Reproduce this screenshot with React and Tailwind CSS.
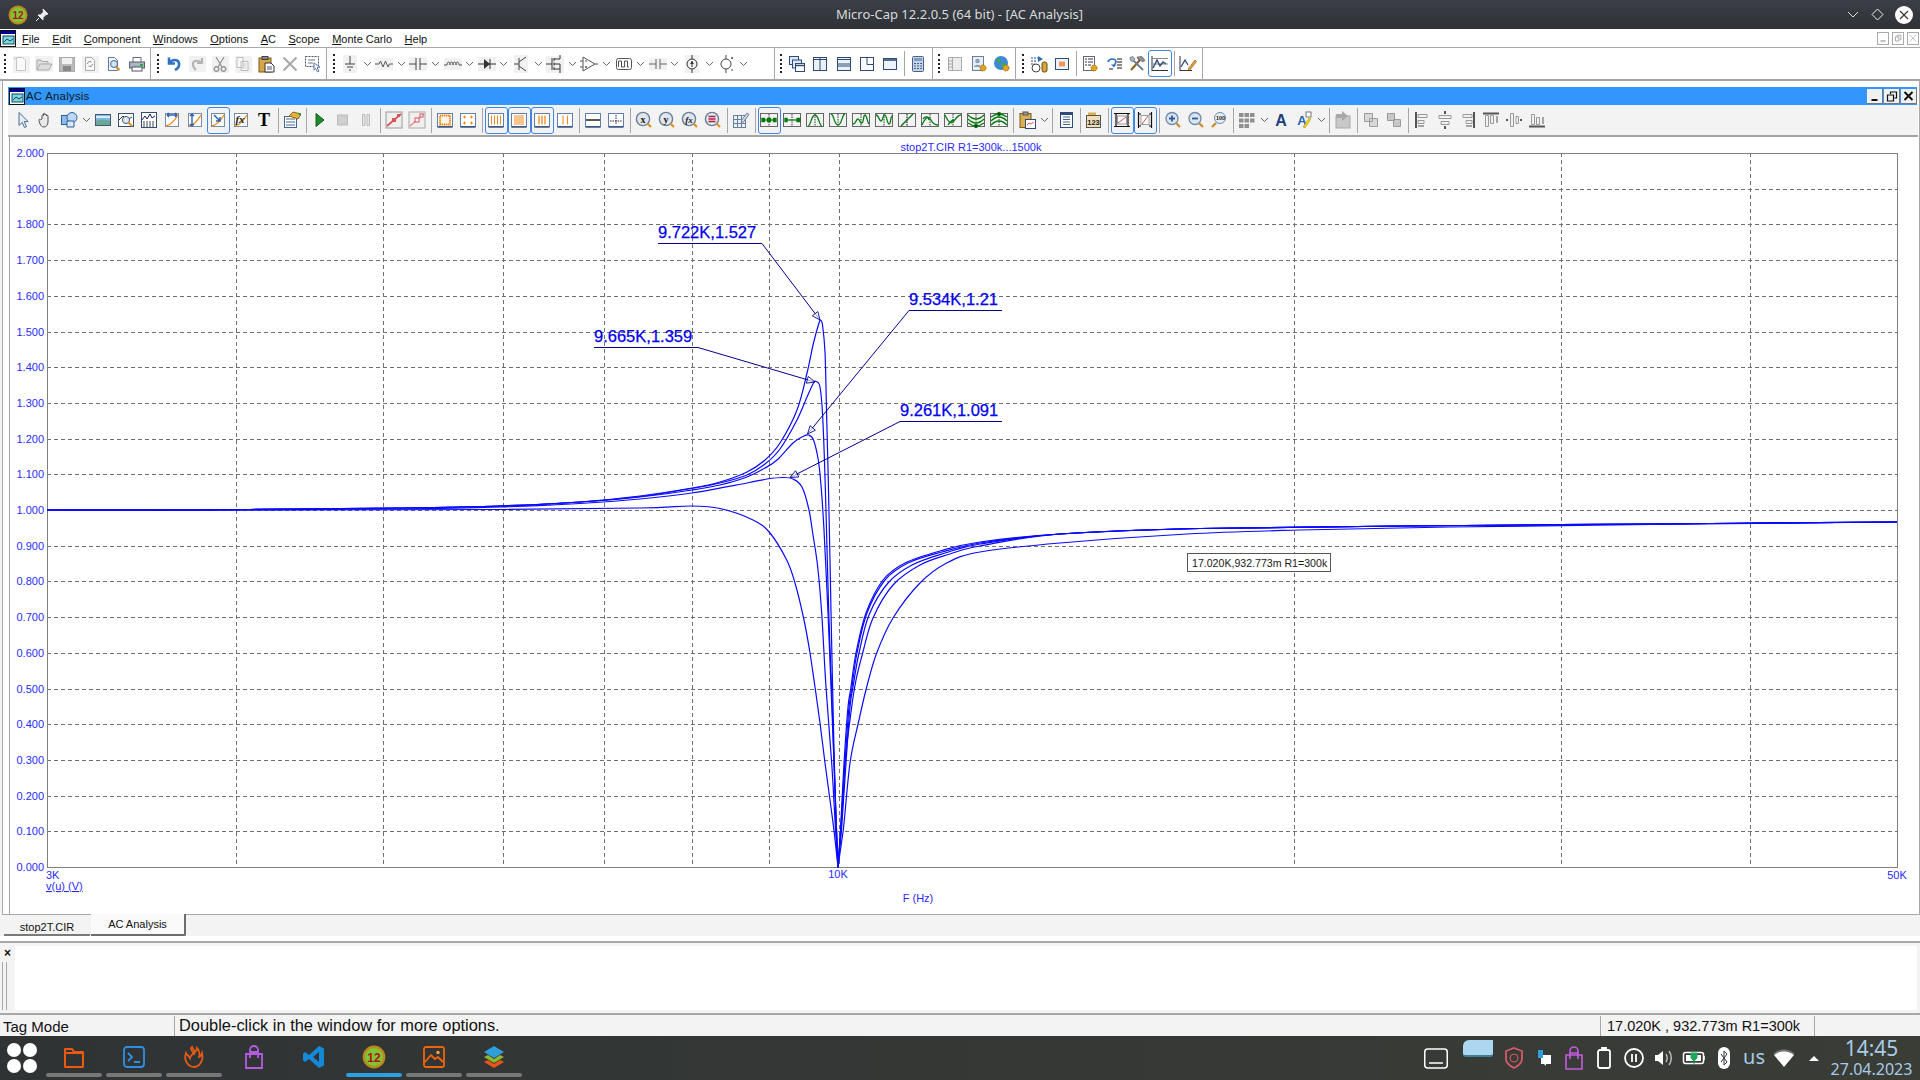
import React from 'react';

const SANS = { fontFamily: '"Liberation Sans", Arial, sans-serif' };

// toolbar glyphs, all drawn on an 18x18 grid
const Ic = ({ children }) => (
  <svg width="18" height="18" viewBox="0 0 18 18" fill="none" className="block">{children}</svg>
);

const Doc = ({ c = '#c4c4c4' }) => <path d="M4.5 2.5h6l3 3v10h-9z" fill="#fafafa" stroke={c} />;
const Frame = ({ c = '#5f7fae' }) => (
  <>
    <rect x="1.5" y="2.5" width="15" height="13" fill="#fff" stroke={c} />
    <path d="M1.5 16h15" stroke="#2d4a78" strokeWidth="1.4" />
  </>
);
const CurveBox = ({ children }) => (
  <>
    <rect x="2.5" y="2.5" width="13" height="13" fill="#fdfdfd" stroke="#7a8ba5" />
    <path d="M3 15C8 14 12 9 15 4" stroke="#ef8a1a" strokeWidth="1.3" />
    {children}
  </>
);
const GreenBox = ({ children, tick = true }) => (
  <>
    <path d="M0.5 2.5h17M0.5 15.5h17M0.5 2v14M17.5 2v14" stroke="#666" strokeWidth="1" />
    {tick && <path d="M9 3v12" stroke="#333" strokeDasharray="1.5 1" />}
    <g stroke="#0a7a12" strokeWidth="1.3">{children}</g>
  </>
);
const Lens = ({ children }) => (
  <>
    <circle cx="8" cy="8" r="6.6" fill="#dfe6ee" stroke="#6d7f96" strokeWidth="1.4" />
    <path d="M12.5 12.5l3.5 3.5" stroke="#e09020" strokeWidth="2.2" />
    {children}
  </>
);
const Txt = ({ x = 9, y = 12, s = 10, c = '#1b1b1b', f = '"Liberation Serif", serif', children, i }) => (
  <text x={x} y={y} fontSize={s} fill={c} textAnchor="middle" fontWeight="700" fontStyle={i ? 'italic' : 'normal'} fontFamily={f}>{children}</text>
);
const Gear = ({ x = 13, y = 13 }) => <circle cx={x} cy={y} r="3" fill="#e0a51c" stroke="#9a6a10" strokeDasharray="1.4 .8" />;

const ICONS = {
  new: <><rect x="1" y="1" width="17" height="17" fill="#f1f1f1" /><Doc /><path d="M2 2l3 3M5 2L2 5" stroke="#ccc" /></>,
  open: <><rect y="1" width="18" height="16" fill="#f1f1f1" /><path d="M2 15V5h4l1 1.5h6V9M2 15l3-6h12l-3 6z" fill="#ddd" stroke="#aaa" /></>,
  save: <><rect x="1.5" y="2.5" width="15" height="14" fill="#bbb" stroke="#aaa" /><rect x="4" y="3" width="10" height="6" fill="#f1f1f1" /><rect x="5" y="11" width="8" height="5" fill="#888" /></>,
  reload: <><rect x="1" y="1" width="17" height="17" fill="#f1f1f1" /><Doc c="#aaa" /><path d="M6.5 9a2.5 2.5 0 0 1 4-2M11.5 9a2.5 2.5 0 0 1-4 2" stroke="#888" /></>,
  preview: <><Doc c="#5a7aa8" /><circle cx="10" cy="9" r="3.5" fill="#cfe3f6" stroke="#44648e" /><path d="M12.5 12l3 3" stroke="#e08a20" strokeWidth="2.2" /></>,
  print: <><path d="M5 7V2.5h8V7" fill="#fff" stroke="#667" /><rect x="1.5" y="7" width="15" height="6" fill="#a9b4c2" stroke="#55606e" /><rect x="4" y="12" width="10" height="4" fill="#fff" stroke="#556" /><rect x="12" y="9" width="3" height="2" fill="#1bb33a" /></>,
  undo: <path d="M4 2.5v6h6M4.5 8C7 4 13 4 14 8c.6 3-1 5.5-4 7" stroke="#2f6fc4" strokeWidth="2.6" />,
  redo: <><rect x="1" y="1" width="17" height="16" fill="#f1f1f1" /><path d="M14 3v5H9M13.5 8C11.5 5 6 5 5 8c-.6 3 1 5 3 7" stroke="#b4b4b4" strokeWidth="2.2" /></>,
  cut: <><rect x="1" y="1" width="17" height="17" fill="#f1f1f1" /><path d="M5 2l6 10M13 2L7 12" stroke="#999" strokeWidth="1.4" /><circle cx="5.5" cy="14" r="2.3" stroke="#999" strokeWidth="1.4" /><circle cx="12.5" cy="14" r="2.3" stroke="#999" strokeWidth="1.4" /></>,
  copy: <><rect x="1" y="1" width="17" height="17" fill="#f1f1f1" /><path d="M3 2.5h6v10H3zM7 6.5h7v9H7z" fill="#fafafa" stroke="#bbb" /><path d="M8.5 9h4M8.5 11h4M8.5 13h4" stroke="#ccc" /></>,
  paste: <><rect x="2" y="3" width="12" height="14" fill="#d8a648" stroke="#7a5a20" /><rect x="5" y="1.5" width="6" height="3" fill="#888" stroke="#444" /><path d="M8 8h6l3 3v6H8z" fill="#fff" stroke="#333" /><path d="M10 12h5M10 14h5" stroke="#557" /></>,
  del: <path d="M2.5 2.5l13 13M15.5 2.5l-13 13" stroke="#aaa" strokeWidth="2.2" />,
  select: <><rect x="1.5" y="1.5" width="13" height="10" stroke="#44566e" strokeDasharray="2 1" /><path d="M4 5h7M4 8h5" stroke="#777" /><path d="M10 8l6 4-3 .6 2 3.5-1.5.8-1.8-3.4L10 15z" fill="#fff" stroke="#5a7ba8" /></>,
  ground: <><rect x="2" y="0" width="14" height="18" fill="#f1f1f1" /><path d="M9 1v8M4 9h10M6 12h6M8 15h2" stroke="#444" /></>,
  res: <><rect y="3" width="18" height="12" fill="#f1f1f1" /><path d="M0 9h4l1.5-3 2.5 6 2.5-6 2.5 6 1.5-3h4" stroke="#555" /></>,
  cap: <><rect y="2" width="18" height="14" fill="#f1f1f1" /><path d="M0 9h7M11 9h7M7 3v12M11 3v12" stroke="#444" /></>,
  ind: <><rect y="3" width="18" height="12" fill="#f1f1f1" /><path d="M0 10h3c0-4 3-4 3 0 0-4 3-4 3 0 0-4 3-4 3 0 0-4 3-4 3 0h3" stroke="#555" /></>,
  diode: <><rect y="2" width="18" height="14" fill="#f1f1f1" /><path d="M0 9h18M12 4v10" stroke="#333" /><path d="M6 4v10l6-5z" fill="#333" /></>,
  bjt: <><rect x="2" width="14" height="18" fill="#f1f1f1" /><path d="M2 9h5M7 3v12M7 7l7-5M7 11l7 5" stroke="#444" /></>,
  mos: <><rect y="1" width="18" height="17" fill="#f1f1f1" /><path d="M0 9h6M6 3v12M8 3v3M8 7.5v3M8 12v3M8 4h6V0M8 14h6v4M8 9h6v5" stroke="#333" /></>,
  opamp: <><path d="M3 2v14l12-7z" fill="#fbfbfb" stroke="#555" /><path d="M0 6h3M0 12h3M15 9h3M5 6h2M5 12h2M6 11v2" stroke="#555" /></>,
  wave: <><rect x="1.5" y="3.5" width="15" height="11" rx="2" stroke="#555" /><path d="M3.5 12V6h3v6h3V6h3v6h1.5" stroke="#555" /></>,
  sep2: <><rect y="3" width="18" height="12" fill="#f1f1f1" /><path d="M0 9h7M11 9h7M7 4v10M11 4v10" stroke="#666" /></>,
  meter: <><rect x="2" width="14" height="18" fill="#f1f1f1" /><circle cx="9" cy="9" r="5" stroke="#333" /><path d="M9 0v4M9 14v4M9 6v6" stroke="#333" /><path d="M7 9l2-3 2 3z" fill="#333" /></>,
  meter2: <><circle cx="9" cy="9" r="5" stroke="#444" /><path d="M9 0v4M9 14v4M14 3h2M15 2v2M14 15h2" stroke="#444" /></>,
  cascade: <><rect x="1.5" y="1.5" width="9" height="8" fill="#dfe9f5" stroke="#2d4a78" /><rect x="4.5" y="5" width="9" height="8" fill="#dfe9f5" stroke="#2d4a78" /><rect x="7.5" y="8.5" width="9" height="8" fill="#fff" stroke="#2d4a78" /><path d="M7.5 10.5h9" stroke="#2d4a78" strokeWidth="1.5" /></>,
  tileV: <><rect x="2.5" y="2.5" width="13" height="13" fill="#e9f0f8" stroke="#2d4a78" /><path d="M9 2v14M2.5 4.5h13" stroke="#2d4a78" /></>,
  tileH: <><rect x="2.5" y="2.5" width="13" height="13" fill="#e9f0f8" stroke="#2d4a78" /><path d="M2 9h14M2.5 4.5h13M2.5 11h13" stroke="#2d4a78" /></>,
  tileC: <><rect x="2.5" y="2.5" width="13" height="13" fill="#fff" stroke="#2d4a78" /><path d="M9 2.5v7h6.500" stroke="#2d4a78" /></>,
  maxi: <><rect x="2.5" y="3.5" width="13" height="11" fill="#eef3f9" stroke="#2d4a78" /><path d="M2.5 5h13" stroke="#2d4a78" strokeWidth="1.6" /></>,
  calc: <><rect x="3.5" y="1.5" width="11" height="15" rx="1" fill="#c8d4e4" stroke="#44648e" /><rect x="5" y="3" width="8" height="3" fill="#7f9dc4" /><path d="M5 8.5h8M5 11h8M5 13.5h8" stroke="#44648e" strokeDasharray="2 1" /></>,
  panel: <><rect x="2.5" y="2.5" width="13" height="13" fill="#ececec" stroke="#aaa" /><path d="M6.5 3v12M3 6h3M3 9h3M3 12h3" stroke="#aaa" /></>,
  usergear: <><rect x="2.5" y="1.5" width="11" height="14" fill="#e7eef6" stroke="#6a7f9c" /><circle cx="7.5" cy="6" r="2.3" fill="#8aa0bd" /><path d="M4 12c0-3 7-3 7 0z" fill="#8aa0bd" /><Gear /></>,
  globegear: <><circle cx="8" cy="8" r="7" fill="#3a8ad4" /><path d="M4 4c3-1 4 1 3 3S3 8 4 4zM9 8c3 0 4 2 2 5-2 1-3-3-2-5z" fill="#47a83c" /><Gear /></>,
  runmeter: <><path d="M1 3h8M1 6h6M1 9h4" stroke="#2d4a78" strokeDasharray="2 1" /><path d="M8 1l5 3-5 3z" fill="#2d6fb8" /><circle cx="6" cy="13" r="4" fill="#fff" stroke="#444" /><rect x="12" y="7" width="5" height="10" rx="2" fill="#d8a838" stroke="#6a5010" /></>,
  wgrad: <><rect x="2.5" y="3.5" width="13" height="11" fill="#eef3f9" stroke="#2d4a78" /><rect x="6" y="6.500" width="6" height="5" fill="#ee9a5a" /></>,
  checks: <><rect x="2.5" y="1.5" width="11" height="14" fill="#fff" stroke="#667" /><path d="M4 4h2M7 4h5M4 7h2M7 7h5M4 10h2M7 10h3" stroke="#335" /><Gear /></>,
  steps: <><path d="M3 7c1-4 8-4 8 0l-2 4" stroke="#2f6fc4" strokeWidth="1.6" /><path d="M6 9.5l3 3 2-3z" fill="#2f6fc4" /><path d="M12 4h5M12 7h5M12 10h5M12 13h5M4 14h4" stroke="#111" /></>,
  tools: <><path d="M3 15L12 5" stroke="#8a5a20" strokeWidth="2" /><path d="M9 2l5-.5 3 4-2 1.500-3-2-2-.5z" fill="#8f8f8f" stroke="#555" strokeWidth=".6" /><path d="M15 15L6 6" stroke="#6f7f90" strokeWidth="2" /><path d="M2 2.500L5 1.500 7 4 5 7 2.500 5.500z" fill="#a9b4c2" stroke="#555" strokeWidth=".6" /></>,
  chart: <><path d="M1 1v15M1 15.5h16" stroke="#333" /><path d="M1 3.5h16M1 9h16" stroke="#888" /><path d="M2 13l4-8 3 6 3-4 3 2" stroke="#2d4a78" strokeWidth="1.4" /></>,
  chartp: <><path d="M1 1v15M1 15.5h12" stroke="#333" /><path d="M2 12l4-7 3 5" stroke="#2d4a78" strokeWidth="1.3" /><path d="M9 14l7-9 1.5 1.5-7 9z" fill="#e4a420" stroke="#744" strokeWidth=".6" /></>,

  arrow: <path d="M5 1.5v13l3.2-3 2.3 5 2-.9-2.300-5h4z" fill="#e6ecf5" stroke="#4d6a94" />,
  hand: <path d="M5 8V4.500c0-1 1.500-1 1.500 0V3c0-1 1.500-1 1.500 0v1c0-1 1.500-1 1.500 0v1c0-1 1.500-1 1.500 0v6c0 3-2 5-4 5s-3-1-4-3L2 9.500c-.6-1 .8-1.700 1.500-.8z" fill="#e8e8e8" stroke="#555" />,
  shapes: <><rect x="1.5" y="4.5" width="8" height="9" fill="#8fbbe8" stroke="#2d5f9c" /><circle cx="12" cy="6.5" r="5" fill="#bcd8f2" stroke="#2d5f9c" /><path d="M7 10h7v6H7z" fill="#d9e8f6" stroke="#2d5f9c" /></>,
  image: <><rect x="1.5" y="3.5" width="15" height="11" fill="#7db8e6" stroke="#44586e" /><path d="M2 14V10c4-2 9-2 14 0v4z" fill="#6aa896" /><path d="M2 6h14" stroke="#d6ebfa" strokeWidth="2" /></>,
  zoomc: <><rect x="1.5" y="2.5" width="15" height="13" fill="#fff" stroke="#33506e" /><path d="M2 9l4-4 4 4 5-3" stroke="#333" /><circle cx="9" cy="9" r="3.6" fill="#dce9f4" stroke="#556" /><path d="M11.5 11.5l3.5 3.500" stroke="#e08a20" strokeWidth="2" /></>,
  table: <><rect x="1.5" y="1.5" width="15" height="15" fill="#fff" stroke="#33506e" /><path d="M2 9l3-4 2 3 3-5 2 4 3-2" stroke="#1b1b6e" /><path d="M3 11h12M3 13h12M3 15h12" stroke="#445" strokeDasharray="2 1" /></>,
  xscale: <CurveBox><path d="M4 4h10M4 4l2-2M4 4l2 2M14 4l-2-2M14 4l-2 2" stroke="#2a62b5" strokeWidth="1.4" /></CurveBox>,
  yscale: <CurveBox><path d="M6 3v12M6 3L4 5M6 3l2 2M6 15l-2-2M6 15l2-2" stroke="#2a62b5" strokeWidth="1.4" /></CurveBox>,
  carrow: <CurveBox><path d="M5 4l6 6M11 6v4H7" stroke="#2a62b5" strokeWidth="1.5" /></CurveBox>,
  fx: <CurveBox><Txt x="8" y="12" s="11" i>fx</Txt></CurveBox>,
  T: <Txt x="9" y="15" s="18" c="#000">T</Txt>,
  note: <><rect x="1.5" y="5.5" width="12" height="11" fill="#fff" stroke="#44648e" /><path d="M3 8h9M3 11h9M3 14h9" stroke="#44648e" /><path d="M6 5l4-4 8 2-3 5z" fill="#e2b13c" stroke="#8a6a1a" /><path d="M14 2h4v3" fill="#2a9a3a" /></>,
  play: <path d="M5 2.5v13l8-6.500z" fill="#1f8a2c" stroke="#14601e" />,
  stop: <rect x="3.5" y="4" width="10" height="10" fill="#cfcfcf" stroke="#bbb" />,
  pause: <path d="M5.5 3.5h2.500v11H5.500zM10 3.500h2.500v11H10z" fill="#e5e5e5" stroke="#bbb" />,
  peak: <><rect x="1" y="1" width="16" height="16" fill="#f0efee" stroke="#999" /><path d="M2 15L16 3" stroke="#d9535a" strokeWidth="1.8" /><rect x="7" y="7" width="4" height="4" fill="#d9535a" /><rect x="12" y="3" width="3" height="3" fill="#d9535a" /></>,
  peak2: <><rect x="1" y="1" width="16" height="16" fill="#f0efee" stroke="#aaa" /><path d="M2 15L16 3" stroke="#e08c90" strokeWidth="1.5" /><rect x="7" y="7" width="4" height="4" fill="#fff" stroke="#d9535a" /><rect x="12" y="3" width="3" height="3" fill="#fff" stroke="#d9535a" /></>,
  osq: <><Frame /><rect x="4" y="4.5" width="10" height="9" fill="#fff4e8" stroke="#ef8a1a" strokeWidth="1.8" strokeDasharray="1.5 .5" /></>,
  plus: <><Frame /><path d="M4 6h3M5.5 4.5v3M11 6h3M12.5 4.5v3M4 12h3M5.5 10.5v3M11 12h3M12.5 10.5v3" stroke="#ef8a1a" /></>,
  g4: <><Frame /><path d="M4.5 4.5v9M7.5 4.5v9M10.5 4.5v9M13.5 4.5v9" stroke="#ef8a1a" /></>,
  gh: <><Frame /><path d="M4 5h10M4 7h10M4 9h10M4 11h10M4 13h10" stroke="#ef8a1a" /></>,
  g3: <><Frame /><path d="M6 4.5v9M9 4.5v9M12 4.5v9" stroke="#ef8a1a" strokeWidth="1.3" /></>,
  g2: <><Frame /><path d="M7 4.5v9M11.5 4.5v9" stroke="#ef8a1a" /></>,
  hline: <><Frame /><path d="M2 9h14" stroke="#111" strokeWidth="1.4" /></>,
  cross: <><Frame /><path d="M3 10h12M9 4v10" stroke="#223" strokeDasharray="1.5 1" /></>,
  lx: <Lens><Txt x="8" y="11.5" s="10">x</Txt></Lens>,
  ly: <Lens><Txt x="8" y="11.5" s="10">y</Txt></Lens>,
  lf: <Lens><Txt x="8" y="11.5" s="9" i>fx</Txt></Lens>,
  ll: <Lens><path d="M4.5 5.5h7M4.5 8h7M4.5 10.5h7" stroke="#b3243a" strokeWidth="1.5" /></Lens>,
  tpen: <><rect x="1.5" y="4.5" width="12" height="12" fill="#e9f0f8" stroke="#6a7f9c" /><path d="M1.5 8.5h12M1.5 12.5h12M5.5 4.5v12M9.5 4.5v12" stroke="#6a7f9c" /><path d="M9 10l6-8 2 1.5-6 8z" fill="#d6dde6" stroke="#6a7f9c" /></>,
  s1: <GreenBox><path d="M2 9h14" /><path d="M2 7.500h2.500v3H2zM7.500 7.500h3v3h-3zM13.500 7.500H16v3h-2.500z" fill="#0a7a12" /></GreenBox>,
  s2: <GreenBox><path d="M2 9h14" /><path d="M2 7.500h2v3H2zM14 7.500h3v3h-3z" fill="#0a7a12" /></GreenBox>,
  s3: <GreenBox><path d="M2 15C5 15 5 4 9 4s4 11 7 11" /></GreenBox>,
  s4: <GreenBox><path d="M2 3c3 0 3 11 7 11s4-11 7-11" /></GreenBox>,
  s5: <GreenBox><path d="M1 13c3 0 3-5 5-5s2 5 4 4 1-8 3-8 2 7 4 9" /></GreenBox>,
  s6: <GreenBox><path d="M1 4c3 0 3 6 5 6s2-7 4-6 2 9 4 9 1-6 3-8" /></GreenBox>,
  s7: <GreenBox tick={false}><path d="M3 15L15 3" strokeWidth="1.5" /><path d="M9 3v12" stroke="#333" strokeDasharray="1.5 1" /></GreenBox>,
  s8: <GreenBox><path d="M1 14C5 5 8 5 10 9s4 5 7 5M2 8c2-3 5-3 6 1" /></GreenBox>,
  s9: <GreenBox><path d="M1 4c4 9 7 9 9 6s4-6 7-6M4 14c2-3 4-5 6-5" /></GreenBox>,
  s10: <GreenBox><path d="M1 4c3 3 5 4 8 4s5-1 8-4M1 8c3 3 5 4 8 4s5-1 8-4M1 12c3 2 5 3 8 3s5-1 8-3" /><circle cx="9" cy="15" r="1.5" fill="#111" /></GreenBox>,
  s11: <GreenBox><path d="M1 6c3-2 5-3 8-3s5 1 8 3M1 10c3-3 5-4 8-4s5 1 8 4M1 14c3-3 5-4 8-4s5 1 8 4" /><circle cx="9" cy="3" r="1.5" fill="#111" /></GreenBox>,
  clip: <><rect x="2" y="2.5" width="11" height="14" fill="#dbae52" stroke="#7a5a20" /><rect x="5" y="1" width="5" height="3" fill="#999" stroke="#555" /><rect x="7.5" y="8.5" width="10" height="9" fill="#fff" stroke="#2d4a78" /><path d="M9 14l2-2 2 1 3-2" stroke="#d9535a" /></>,
  doc: <><rect x="3.5" y="1.5" width="12" height="15" fill="#fff" stroke="#2d4a78" /><path d="M3.5 3h12" stroke="#2d4a78" strokeWidth="2" /><path d="M6 6h7M6 8.5h7M6 11h7M6 13.5h7" stroke="#44648e" /></>,
  n123: <><path d="M3 1.5h8v3H3z" fill="#dbae52" /><rect x="1.5" y="4.5" width="14" height="12" fill="#efe0b8" stroke="#555" /><Txt x="8.5" y="14" s="7.5" f='"Liberation Sans", sans-serif' c="#222">123</Txt></>,
  fitx: <><path d="M1 2.5h16M1 15.5h16M3 3v12M15 3v12" stroke="#111" strokeWidth="1.2" /><rect x="4.5" y="5" width="9" height="8" fill="#fff" stroke="#999" /><path d="M5 12l8-6" stroke="#e0535a" /></>,
  fity: <><path d="M2.5 1v16M15.5 1v16" stroke="#111" strokeWidth="1.2" /><path d="M2 3h3M13 3h3M2 15h3M13 15h3" stroke="#111" /><rect x="5" y="4.5" width="8" height="9" fill="#fff" stroke="#999" /><path d="M6 13l6-8" stroke="#e0535a" /></>,
  zin: <><circle cx="8" cy="7.5" r="6" fill="#dbe6f1" stroke="#7089a6" strokeWidth="1.3" /><path d="M5 7.5h6M8 4.5v6" stroke="#2d5f9c" strokeWidth="1.8" /><path d="M12 12l4 4" stroke="#c99030" strokeWidth="2.4" /></>,
  zout: <><circle cx="8" cy="7.5" r="6" fill="#dbe6f1" stroke="#7089a6" strokeWidth="1.3" /><path d="M5 7.5h6" stroke="#2d5f9c" strokeWidth="1.8" /><path d="M12 12l4 4" stroke="#c99030" strokeWidth="2.4" /></>,
  z100: <><circle cx="10" cy="7" r="5.5" fill="#e6eef6" stroke="#7089a6" /><path d="M6 12l-4 4" stroke="#c99030" strokeWidth="2.4" /><Txt x="10.5" y="9" s="5.5" f='"Liberation Sans", sans-serif' c="#222">100</Txt></>,
  six: <path d="M1 2h4.500v4H1zM6.500 2H11v4H6.500zM12 2h4.500v4H12zM1 7.500h4.500v4H1zM6.500 7.500H11v4H6.500zM12 7.500h4.500v4H12zM1 13h4.500v4H1zM6.500 13H11v4H6.500z" fill="#8f8f8f" />,
  A: <Txt x="9" y="15" s="16" c="#1d3f7a" f='"Liberation Sans", sans-serif'>A</Txt>,
  Ap: <><Txt x="7" y="14" s="13" c="#2a62b5" f='"Liberation Sans", sans-serif'>A</Txt><path d="M8 16l6-9 2 1-6 9z" fill="#f0d020" stroke="#a08810" strokeWidth=".5" /><rect x="11" y="1" width="5" height="5" fill="#fff" stroke="#777" /></>,
  boxa: <><rect x="2" y="5" width="14" height="12" fill="#c8c8c8" stroke="#aaa" /><path d="M2 3h6V0l6 5-6 5V7H2z" fill="#a8a8a8" /></>,
  st1: <path d="M2.5 2.5h8v8h-8zM7.5 7.5h8v8h-8z" fill="#d8d8d8" stroke="#9a9a9a" />,
  st2: <path d="M2.5 2.5h7v7h-7zM8.5 8.5h7v7h-7z" fill="#c8c8c8" stroke="#9a9a9a" />,
  al1: <><path d="M3 1v16" stroke="#555" strokeWidth="2" /><path d="M5 3.5h9v3H5zM5 9.5h6v3H5z" fill="#f1f1f1" stroke="#999" /><path d="M5 15h6" stroke="#555" /></>,
  al2: <><path d="M9 0v3M9 15v3" stroke="#555" strokeWidth="2" /><path d="M3 4.5h12v3H3zM5 10.5h8v3H5z" fill="#f1f1f1" stroke="#999" /></>,
  al3: <><path d="M15 1v16" stroke="#555" strokeWidth="2" /><path d="M4 3.5h9v3H4zM7 9.5h6v3H7z" fill="#f1f1f1" stroke="#999" /><path d="M7 15h6" stroke="#555" /></>,
  al4: <><path d="M1 2.5h16" stroke="#555" strokeWidth="2" /><path d="M3.5 4.5h3v11h-3zM8.500 4.500h3v8h-3z" fill="#f1f1f1" stroke="#999" /><path d="M15 5v7" stroke="#555" /></>,
  al5: <><path d="M1 9h2M15 9h2" stroke="#555" strokeWidth="2" /><path d="M5.5 2.5h3v13h-3zM11 5.500h2.500v7H11z" fill="#f1f1f1" stroke="#999" /></>,
  al6: <><path d="M1 15.5h16" stroke="#555" strokeWidth="2" /><path d="M3.5 3.5h3v10h-3zM8.500 6.500h3v7h-3z" fill="#f1f1f1" stroke="#999" /><path d="M15 6v7" stroke="#555" /></>,
};

const Chev = () => (
  <div className="w-[11px] flex items-center justify-center shrink-0">
    <svg width="9" height="6" viewBox="0 0 9 6" fill="none"><path d="M1 1l3.5 3.5L8 1" stroke="#666" /></svg>
  </div>
);

const Grip = () => (
  <div className="w-[9px] h-full flex items-center justify-center shrink-0">
    <div className="h-[19px] w-[2px] border-l-2 border-dotted border-[#222]" />
  </div>
);

const ToolItem = ({ item, pitch }) => {
  if (item === '|') return <div className="w-[5px] shrink-0 flex justify-center h-[25px]"><div className="w-[1px] h-full bg-[#a6a6a6]" /></div>;
  if (item === '||') return <div className="w-[5px] shrink-0 flex justify-center self-stretch"><div className="w-[1px] h-full bg-[#a6a6a6]" /></div>;
  if (item === 'g') return <Grip />;
  if (item === 'v') return <Chev />;
  if (item === '_') return <div className="w-[23px] shrink-0" />;
  const sel = item.endsWith('*');
  const name = sel ? item.slice(0, -1) : item;
  return (
    <div className={`${pitch} h-[27px] shrink-0 flex items-center justify-center rounded-[3px] ${sel ? 'border border-[#3f87e6]' : ''}`}>
      <Ic>{ICONS[name]}</Ic>
    </div>
  );
};

const mainTools = [
  'g', 'new', 'open', 'save', 'reload', 'preview', 'print', '||', 'g',
  'undo', 'redo', 'cut', 'copy', 'paste', 'del', 'select', '||', 'g',
  'ground', 'v', 'res', 'v', 'cap', 'v', 'ind', 'v', 'diode', 'v', 'bjt', 'v', 'mos', 'v', 'opamp', 'v', 'wave', 'v', 'sep2', 'v', 'meter', 'v', 'meter2', 'v', '_', '||', 'g',
  'cascade', 'tileV', 'tileH', 'tileC', 'maxi', '|', 'calc', '||', 'g',
  'panel', 'usergear', 'globegear', '||', 'g',
  'runmeter', 'wgrad', '|', 'checks', 'steps', 'tools', 'chart*', '|', 'chartp', '||',
];

const plotTools = [
  'arrow', 'hand', 'shapes', 'v', 'image', 'zoomc', 'table', 'xscale', 'yscale', 'carrow*', 'fx', 'T', '|', 'note', '|',
  'play', 'stop', 'pause', '|', 'peak', 'peak2', '|', 'osq', 'plus', '|', 'g4*', 'gh*', 'g3*', 'g2', '|', 'hline', 'cross', '|',
  'lx', 'ly', 'lf', 'll', '|', 'tpen', '|', 's1*', 's2', 's3', 's4', 's5', 's6', 's7', 's8', 's9', 's10', 's11', '|',
  'clip', 'v', '|', 'doc', '|', 'n123', '|', 'fitx*', 'fity*', '|', 'zin', 'zout', 'z100', '|', 'six', 'v', 'A', 'Ap', 'v', '|', 'boxa', '|', 'st1', 'st2', '|',
  'al1', 'al2', 'al3', 'al4', 'al5', 'al6',
];

const menus = ['File', 'Edit', 'Component', 'Windows', 'Options', 'AC', 'Scope', 'Monte Carlo', 'Help'];

// chart scale
const X0 = 47, X1 = 1897, Y0 = 867, Y1 = 153;
const fx = (k) => X0 + (X1 - X0) * Math.log10(k / 3) / Math.log10(50 / 3);
const fy = (v) => Y0 - (Y0 - Y1) * v / 2;

const LEFT = [[47, 510], [250, 509.5], [400, 508], [500, 506], [580, 502]];
const TAIL = [[1060, 534], [1200, 528.5], [1400, 526], [1650, 524], [1897, 522]];

const curves = [
  // R1 = 1500k side, sharpest peak
  [...LEFT, [640, 496], [692, 488], [720, 482], [747, 472], [765, 460], [780, 443], [797, 410], [807, 373], [813.5, 343], [819, 323], [820.7, 320.5], [822.5, 325], [825, 352], [826.5, 410], [828.3, 480], [830, 560], [832, 660], [834, 750], [836, 820], [838, 867],
    [840.5, 830], [844, 763], [848, 707], [851, 687], [856, 653], [866, 613], [883, 580], [905, 563], [940, 551], [980, 542], ...TAIL],
  [...LEFT, [640, 496.5], [692, 488.5], [720, 483], [747, 475], [765, 464], [780, 449], [797, 420], [807, 397], [813.5, 383], [816, 381.5], [820, 387], [822.7, 417], [825, 477], [826.5, 530], [829, 620], [832, 700], [835, 790], [838, 867],
    [841, 830], [845, 763], [849, 707], [852, 687], [857, 653], [867, 613], [885, 580], [908, 563], [942, 552], [980, 543], ...TAIL],
  [...LEFT, [640, 497], [692, 490], [720, 485], [747, 477], [765, 468], [777, 460], [793, 443], [803, 436.5], [808.3, 435], [813.5, 440], [818.3, 460], [821, 485], [824, 530], [828, 613], [831, 687], [834, 763], [836, 820], [838, 867],
    [841.5, 830], [846, 763], [850, 707], [853, 687], [859, 653], [869, 615], [888, 583], [912, 565], [945, 553], [980, 544], ...TAIL],
  [[47, 510], [250, 510], [400, 509], [500, 507], [580, 503.5], [640, 499], [692, 493], [747, 483], [767, 479], [783, 477.5], [793, 479], [802, 487], [809, 510], [813, 535], [817.7, 567], [821.7, 613], [826, 687], [831.7, 763], [835.7, 833], [838, 867],
    [840.7, 830], [845, 763], [851.7, 707], [856, 680], [862.7, 653], [873, 618], [893, 585], [920, 565], [950, 554], [980, 546], ...TAIL],
  [[47, 510], [300, 510], [500, 509.5], [640, 508], [692, 506], [720, 508.5], [753, 520], [770, 533], [786.7, 560], [795, 583], [804, 620], [810, 653], [815, 687], [820, 723], [825, 763], [830, 800], [834.3, 833], [838, 867],
    [843.3, 830], [850, 763], [858.3, 723], [866.7, 687], [876.7, 653], [893, 618], [920, 583], [946.7, 563], [980, 552], [1060, 543], [1187, 534], [1300, 530], [1450, 527], [1650, 524.5], [1897, 522]],
];

const smooth = (pts) => {
  let d = `M${pts[0][0]} ${pts[0][1]}`;
  for (let i = 0; i < pts.length - 1; i++) {
    const p0 = pts[i - 1] || pts[i], p1 = pts[i], p2 = pts[i + 1], p3 = pts[i + 2] || p2;
    const k = p2[1] === 867 || p1[1] === 867 ? 0 : 1 / 6;
    d += `C${(p1[0] + (p2[0] - p0[0]) * k).toFixed(1)} ${(p1[1] + (p2[1] - p0[1]) * k).toFixed(1)} ${(p2[0] - (p3[0] - p1[0]) * k).toFixed(1)} ${(p2[1] - (p3[1] - p1[1]) * k).toFixed(1)} ${p2[0]} ${p2[1]}`;
  }
  return d;
};

const tags = [
  { text: '9.722K,1.527', x: 658, y: 238, line: [658, 243, 762], tip: [820, 320], rot: 52 },
  { text: '9.665K,1.359', x: 594, y: 342, line: [594, 347, 698], tip: [815, 382], rot: 16 },
  { text: '9.534K,1.21', x: 909, y: 305, line: [909, 310, 1002], tip: [807.5, 434], rot: 131 },
  { text: '9.261K,1.091', x: 900, y: 416, line: [900, 421, 1002], tip: [790, 477.5], rot: 153 },
];

const Plot = () => (
  <svg width="1906" height="775" viewBox="10 137 1906 775" className="block" style={SANS}>
    <rect x={X0} y={Y1} width={X1 - X0} height={Y0 - Y1} fill="#fff" />
    {[1.9, 1.8, 1.7, 1.6, 1.5, 1.4, 1.3, 1.2, 1.1, 1, 0.9, 0.8, 0.7, 0.6, 0.5, 0.4, 0.3, 0.2, 0.1].map((v) => (
      <line key={v} x1={X0} x2={X1} y1={Math.round(fy(v)) + 0.5} y2={Math.round(fy(v)) + 0.5} stroke="#707070" strokeDasharray="4 3" />
    ))}
    {[4, 5, 6, 7, 8, 9, 10, 20, 30, 40].map((k) => (
      <line key={k} x1={Math.round(fx(k)) + 0.5} x2={Math.round(fx(k)) + 0.5} y1={Y1} y2={Y0} stroke="#707070" strokeDasharray="4 3" />
    ))}
    <rect x={X0 + 0.5} y={Y1 + 0.5} width={X1 - X0} height={Y0 - Y1} fill="none" stroke="#808080" />
    {[2, 1.9, 1.8, 1.7, 1.6, 1.5, 1.4, 1.3, 1.2, 1.1, 1, 0.9, 0.8, 0.7, 0.6, 0.5, 0.4, 0.3, 0.2, 0.1, 0].map((v) => (
      <text key={v} x="44" y={fy(v) + 4} textAnchor="end" fontSize="11" fill="#2a2aff">{v.toFixed(3)}</text>
    ))}
    <text x="971" y="151" textAnchor="middle" fontSize="11" fill="#2a2aff">stop2T.CIR R1=300k...1500k</text>
    <text x="46" y="879" fontSize="11" fill="#2a2aff">3K</text>
    <text x="838" y="878" textAnchor="middle" fontSize="11" fill="#2a2aff">10K</text>
    <text x="1897" y="879" textAnchor="middle" fontSize="11" fill="#2a2aff">50K</text>
    <text x="46" y="890" fontSize="11" fill="#2a2aff" textDecoration="underline">v(u) (V)</text>
    <text x="918" y="902" textAnchor="middle" fontSize="11" fill="#2a2aff">F (Hz)</text>

    {curves.map((c, i) => (
      <path key={i} d={smooth(c)} fill="none" stroke="#0a0aff" strokeWidth="1.2" strokeLinejoin="round" />
    ))}

    {tags.map((t) => {
      const [lx, ly, lr] = t.line;
      const startX = t.rot > 90 ? lx : lr;
      return (
        <g key={t.text}>
          <path d={`M${lx} ${ly + 0.5}H${lr}`} stroke="#000090" strokeWidth="1" />
          <path d={`M${startX} ${ly + 0.5}L${t.tip[0]} ${t.tip[1]}`} stroke="#000090" strokeWidth="1" />
          <path d="M0 0L-8 -3.5V3.5Z" fill="#fff" fillOpacity="0.6" stroke="#000090" strokeWidth="0.8" transform={`translate(${t.tip[0]} ${t.tip[1]}) rotate(${t.rot})`} />
          <text x={t.x} y={t.y} fontSize="16.5" fill="#0000ff" stroke="#0000c0" strokeWidth="0.25">{t.text}</text>
        </g>
      );
    })}

    <rect x="1187.5" y="553.5" width="143" height="18" fill="#fff" stroke="#555" />
    <text x="1192" y="566.5" fontSize="10.6" fill="#1a1a1a">17.020K,932.773m R1=300k</text>
  </svg>
);

const Logo = ({ size = 20 }) => (
  <svg width={size} height={size} viewBox="0 0 20 20" className="block">
    <circle cx="10" cy="10" r="9.5" fill="#b98a1e" />
    <circle cx="10" cy="10" r="7.5" fill="#7ec53a" />
    <text x="10" y="13.8" textAnchor="middle" fontSize="10" fontWeight="700" fill="#b3120f" style={SANS}>12</text>
  </svg>
);

const DocIcon = () => (
  <svg width="16" height="17" viewBox="0 0 16 17" className="block shrink-0">
    <rect x=".5" y=".5" width="15" height="16" fill="#fff" stroke="#111" />
    <rect x="1" y="1" width="14" height="3" fill="#00009a" />
    <rect x="3" y="6" width="11" height="8" fill="#7fd7d7" stroke="#0a4a6a" />
    <path d="M4 12l3-3 3 2 3-2" stroke="#0a4a6a" fill="none" />
  </svg>
);

const TaskIcon = ({ children, bar }) => (
  <div className="relative w-[60px] h-full flex items-center justify-center">
    <svg width="24" height="24" viewBox="0 0 24 24" fill="none" className="block -mt-[3px]">{children}</svg>
    {bar && <div className={`absolute bottom-[3px] left-[2px] right-[2px] h-[4px] rounded-full ${bar}`} />}
  </div>
);

const Tray = ({ children, w = 24 }) => (
  <div className="w-[30px] flex items-center justify-center shrink-0">
    <svg width={w} height="24" viewBox="0 0 24 24" fill="none" className="block">{children}</svg>
  </div>
);

export default function App() {
  return (
    <div className="w-[1920px] h-[1080px] overflow-hidden flex flex-col bg-[#f3f3f3] text-[#111]" style={SANS}>
      {/* KDE title bar */}
      <div className="h-[29px] shrink-0 flex items-center bg-gradient-to-b from-[#3c3f47] to-[#2e3236] relative">
        <div className="ml-[8px]"><Logo /></div>
        <svg width="14" height="14" viewBox="0 0 14 14" className="ml-[7px]"><path d="M8 1l5 5-2 .5-3 3 0 2.5-5-5 2.5 0 3-3zM4 10l-3 3" fill="#eee" stroke="#eee" /></svg>
        <div className="flex-1 text-center text-[13px] text-[#d8dadd] ml-[24px]" style={{ fontFamily: '"Noto Sans", sans-serif' }}>Micro-Cap 12.2.0.5 (64 bit) - [AC Analysis]</div>
        <div className="flex items-center gap-[11px] pr-[7px]">
          <svg width="14" height="10" viewBox="0 0 14 10" fill="none"><path d="M2 2l5 5 5-5" stroke="#ddd" /></svg>
          <svg width="13" height="13" viewBox="0 0 13 13" fill="none"><path d="M6.5 1l5.5 5.5L6.5 12 1 6.5z" stroke="#eee" /></svg>
          <div className="w-[18px] h-[18px] rounded-full bg-white flex items-center justify-center">
            <svg width="10" height="10" viewBox="0 0 10 10" fill="none"><path d="M1 1l8 8M9 1L1 9" stroke="#333" strokeWidth="1.2" /></svg>
          </div>
        </div>
      </div>

      {/* menu */}
      <div className="h-[19px] shrink-0 flex items-center bg-white border-b border-[#a8a8a8] text-[11px]">
        <DocIcon />
        <div className="flex ml-[6px] gap-[12.5px] pt-[2px]">
          {menus.map((m) => (
            <span key={m}><span className="underline">{m[0]}</span>{m.slice(1)}</span>
          ))}
        </div>
        <div className="ml-auto flex gap-[3px] pr-[1px]">
          {[<path key="a" d="M3 9.5h6" stroke="#999" strokeWidth="1.5" />, <path key="b" d="M3 4.5h4v5H3zM5 4V2.5h4.5V8H8" stroke="#999" />, <path key="c" d="M2 2l8 8M10 2l-8 8" stroke="#bbb" />].map((g, i) => (
            <svg key={i} width="12" height="13" viewBox="0 0 12 13" fill="none" className="border border-[#aaa]">{g}</svg>
          ))}
        </div>
      </div>

      {/* main toolbar */}
      <div className="h-[31px] shrink-0 flex items-center bg-white">
        {mainTools.map((t, i) => <ToolItem key={i} item={t} pitch="w-[23.2px]" />)}
      </div>

      {/* MDI area */}
      <div className="flex-1 min-h-0 flex flex-col border-t-2 border-[#a4a4a4] pl-[2px]">
        <div className="flex-1 min-h-0 flex flex-col bg-white border-l border-r border-b border-[#a8a8a8] pt-[6px] pl-[5px] pr-[2px]">
          <div className="h-[18px] shrink-0 bg-[#3296ff] flex items-center text-[11.5px] text-[#101820]">
            <div className="ml-[1px] mr-[1px]"><DocIcon /></div>
            <span className="tracking-[0.2px] pt-[1px]">AC Analysis</span>
            <div className="ml-auto flex gap-[1px]">
              {[<path key="a" d="M4 11h6" stroke="#111" strokeWidth="2" />, <path key="b" d="M3 6h6v6H3zM6 5V3h6v6h-2" stroke="#111" strokeWidth="1.2" />, <path key="c" d="M3 3l8 8M11 3l-8 8" stroke="#111" strokeWidth="2" />].map((g, i) => (
                <svg key={i} width="16" height="15" viewBox="0 0 14 14" fill="none" className="bg-[#f0f0f0] border-b border-r border-[#777]">{g}</svg>
              ))}
            </div>
          </div>
          <div className="h-[30px] shrink-0 flex items-center bg-[#f3f3f3] pl-[3.5px] border-b-2 border-[#a4a4a4] -mr-[1px] box-content">
            {plotTools.map((t, i) => <ToolItem key={i} item={t} pitch="w-[23px]" />)}
          </div>
          <div className="flex-1 min-h-0 ml-[1px] border-l border-[#a4a4a4] overflow-hidden">
            <Plot />
          </div>
        </div>
      </div>

      {/* document tabs */}
      <div className="h-[22px] shrink-0 flex items-end pl-[4px] text-[11px] border-b border-white bg-[#f3f3f3]">
        <div className="w-[86px] h-[19px] flex items-center justify-center border-b-2 border-[#7a7a7a] pt-[3px]">stop2T.CIR</div>
        <div className="w-[95px] h-[22px] ml-[1px] flex items-center justify-center bg-[#fafafa] border-r-2 border-b-2 border-[#6d6d6d] rounded-br-[2px]">AC Analysis</div>
      </div>

      {/* output pane */}
      <div className="h-[5px] shrink-0 bg-white" />
      <div className="h-[74px] shrink-0 flex border-t-2 border-b-2 border-[#a8a8a8] -mt-[1px] bg-[#f3f3f3] py-[3px] pr-[3px]">
        <div className="w-[15px] shrink-0 flex flex-col items-center text-[12px] leading-[14px] font-bold">
          <span>×</span>
          <div className="flex-1 mt-[2px] w-[5px] border-l border-r border-[#a8a8a8] -ml-[7px]" />
        </div>
        <div className="flex-1 bg-white" />
      </div>

      {/* status bar */}
      <div className="h-[21px] shrink-0 flex items-center leading-none bg-[#f3f3f3] pt-[1px]">
        <div className="w-[175px] h-full flex items-center pl-[3px] border-r border-[#a8a8a8] text-[15px]">Tag Mode</div>
        <div className="w-[1425px] pl-[4px] text-[16.4px] -mt-[2px]">Double-click in the window for more options.</div>
        <div className="w-[215px] h-full flex items-center pl-[6px] border-l border-r border-[#a8a8a8] text-[14.5px]">17.020K , 932.773m R1=300k</div>
      </div>

      {/* taskbar */}
      <div className="h-[44px] shrink-0 flex items-stretch bg-gradient-to-r from-[#2f3334] to-[#3a3d36]">
        <div className="w-[44px] pl-[7px] grid grid-cols-[14px_14px] gap-x-[2px] gap-y-[2px] content-center">
          {[0, 1, 2, 3].map((d) => <div key={d} className="w-[14px] h-[14px] rounded-full bg-white" />)}
        </div>
        <TaskIcon bar="bg-[#777]"><path d="M3 7V4h7l2 3h9v15H3zM3 8h18" stroke="#f05a10" strokeWidth="2" strokeLinejoin="round" /></TaskIcon>
        <TaskIcon bar="bg-[#777]"><rect x="2" y="2" width="20" height="20" rx="3" stroke="#2f8fe6" strokeWidth="1.8" /><path d="M6 8l4 4-4 4M12 17h6" stroke="#2f8fe6" strokeWidth="1.8" /></TaskIcon>
        <TaskIcon bar="bg-[#777]"><path d="M10 2c1 3 4 4 2 7-1-2-3-3-3-6zM4 8c-3 8 3 14 8 14s10-6 8-14c-1 3-2 4-3 4 1-3 0-7-2-9 0 5-6 5-7 10-1-2-3-3-4-5z" stroke="#e25a14" strokeWidth="1.8" /></TaskIcon>
        <TaskIcon><path d="M4 9h16v14H4zM8 13V5a4 4 0 0 1 8 0v8M8 7h8" stroke="#b45ce0" strokeWidth="1.8" /></TaskIcon>
        <TaskIcon><path d="M17 1l5 2.5v17L17 23 7 14l-4 3-2-1.5v-7L3 7l4 3z" fill="#1489d8" /><path d="M17 7l-6 5 6 5z" fill="#303434" /></TaskIcon>
        <div className="relative w-[60px] flex items-center justify-center">
          <div className="-mt-[3px]"><Logo size={24} /></div>
          <div className="absolute bottom-[3px] left-[2px] right-[2px] h-[4px] rounded-full bg-[#2f9fe0]" />
        </div>
        <TaskIcon bar="bg-[#777]"><rect x="2" y="2" width="20" height="20" rx="2" stroke="#f0640c" strokeWidth="1.8" /><path d="M3 17l6-7 4 4 3-2 5 5" stroke="#f0640c" strokeWidth="1.8" /><circle cx="16" cy="7.5" r="1.8" fill="#f0a040" /></TaskIcon>
        <TaskIcon bar="bg-[#777]"><path d="M12 1l10 6-10 6L2 7z" fill="#2f9fdc" /><path d="M2 12l10 6 10-6-4-2-6 4-6-4z" fill="#8ab82e" /><path d="M2 17l10 6 10-6-4-2-6 4-6-4z" fill="#e8541c" /></TaskIcon>

        <div className="ml-auto flex items-center pr-[6px]">
          <Tray><rect x=".75" y="3" width="22.5" height="19" rx="3" stroke="#fff" strokeWidth="1.5" /><path d="M5 17h14" stroke="#fff" strokeWidth="1.5" /></Tray>
          <div className="w-[30px] h-[17px] self-start mt-[4px] ml-[12px] mr-[6px] bg-[#add6f0] border-b-2 border-[#3f7f9a] rounded-b-[3px] rounded-tl-[6px]" />
          <Tray><path d="M12 2l8 3v8c0 4-4 7-8 9-4-2-8-5-8-9V5z" stroke="#d85a6a" strokeWidth="1.8" /><circle cx="12" cy="12" r="4" stroke="#d85a6a" /></Tray>
          <Tray><path d="M6 4h5v8H6z" fill="#2f9fdc" /><path d="M11 9h8v9h-5v2l-2-2H9v-6h2z" fill="#fff" /></Tray>
          <Tray><path d="M4 9h16v14H4zM8 13V5a4 4 0 0 1 8 0v8M8 7h8" stroke="#c45ce0" strokeWidth="1.6" /></Tray>
          <Tray><rect x="6" y="4" width="12" height="18" rx="2" stroke="#fff" strokeWidth="1.8" /><path d="M10 4V2h4v2" stroke="#fff" strokeWidth="1.8" /></Tray>
          <Tray><circle cx="12" cy="12" r="9" stroke="#fff" strokeWidth="1.8" /><path d="M10 8v8M14 8v8" stroke="#fff" strokeWidth="1.8" /></Tray>
          <Tray><path d="M3 9h3l5-4v14l-5-4H3z" fill="#fff" /><path d="M14 8c1.5 2 1.5 6 0 8M17 5c3 4 3 10 0 14" stroke="#bbb" strokeWidth="1.5" /></Tray>
          <Tray><rect x="1.5" y="6.5" width="20" height="11" rx="2" stroke="#fff" strokeWidth="1.5" /><rect x="4" y="9" width="15" height="6" fill="#fff" /><path d="M22 10v4" stroke="#fff" strokeWidth="1.5" /><path d="M9 7h6v5l-3 3-3-3zM12 15v4" fill="#1fa85a" stroke="#1fa85a" /></Tray>
          <Tray><rect x="6" y="1" width="12" height="22" rx="6" fill="#fff" /><path d="M9 8l6 8-3 3V5l3 3-6 8" stroke="#333" /></Tray>
          <div className="w-[30px] text-center text-[20px] text-[#a8cbe6] shrink-0 -mt-[3px]" style={{ fontFamily: '"Noto Sans", sans-serif' }}>us</div>
          <Tray><path d="M2 9c6-5 14-5 20 0l-10 12z" fill="#fff" /><path d="M2 8c6-5 14-5 20 0" stroke="#777" strokeWidth="1.5" /></Tray>
          <Tray><path d="M7 15l5-5 5 5z" fill="#fff" /></Tray>
          <div className="w-[85px] flex flex-col items-center text-[#a8cbe6]" style={{ fontFamily: '"Noto Sans", sans-serif' }}>
            <span className="text-[21px] leading-[23px]">14:45</span>
            <span className="text-[16px] leading-[19px]">27.04.2023</span>
          </div>
        </div>
      </div>
    </div>
  );
}
